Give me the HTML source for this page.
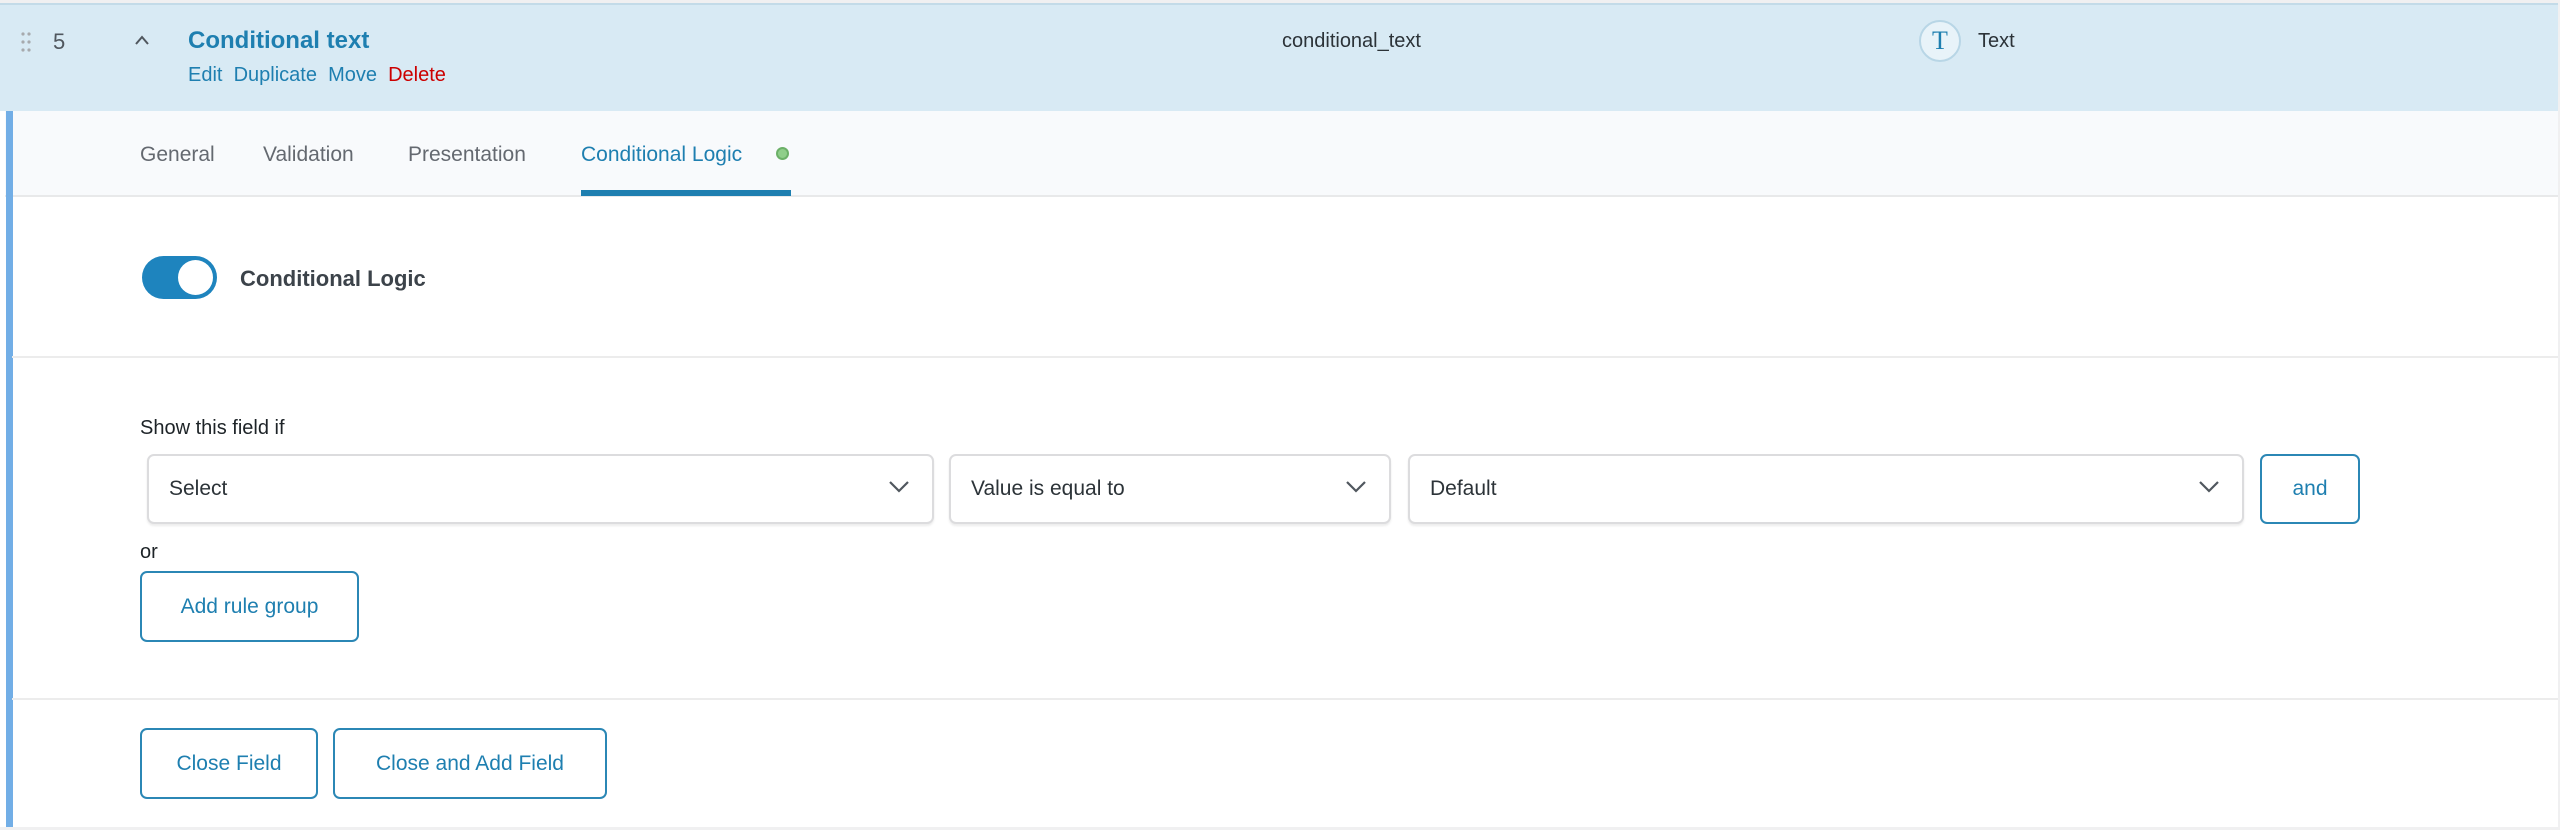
<!DOCTYPE html>
<html><head><meta charset="utf-8"><style>
*{box-sizing:border-box;margin:0;padding:0}
body{width:2560px;height:830px;background:#f0f0f1;font-family:"Liberation Sans",sans-serif;position:relative;overflow:hidden}
.a{position:absolute;white-space:nowrap}
.box{position:absolute;left:0;top:3px;width:2558px;height:824px;background:#fff;border-top:2px solid #c3dbe8}
.hdr{position:absolute;left:0;top:5px;width:2558px;height:106px;background:#d8eaf4}
.tabs{position:absolute;left:5px;top:111px;width:2553px;height:86px;background:#f8fafc;border-bottom:2px solid #e8e9ea}
.bar{position:absolute;left:6px;top:111px;width:7px;height:716px;background:#72aee6}
.hr{position:absolute;left:12px;width:2546px;height:2px;background:#ececec}
.sel{position:absolute;top:454px;height:70px;border:2px solid #dcdcde;border-radius:7px;background:#fff;box-shadow:0 2px 2px rgba(0,0,0,.08);font-size:21px;color:#2c3338;padding-left:20px;line-height:66px}
.sel svg{position:absolute;right:22px;top:24px}
.btn{position:absolute;border:2px solid #2b87b5;border-radius:7px;color:#1e7fb0;font-size:21px;text-align:center;background:#fff}
.tab{position:absolute;top:143px;font-size:21px;color:#646970;white-space:nowrap}
</style></head><body>
<div class="box"></div>
<div class="hdr"></div>
<div class="tabs"></div>
<div class="bar"></div>
<svg class="a" style="left:20px;top:31px" width="12" height="22"><g fill="#a7aaad"><circle cx="3" cy="3" r="1.6"/><circle cx="9" cy="3" r="1.6"/><circle cx="3" cy="11" r="1.6"/><circle cx="9" cy="11" r="1.6"/><circle cx="3" cy="19" r="1.6"/><circle cx="9" cy="19" r="1.6"/></g></svg>
<div class="a" style="left:53px;top:29px;font-size:22px;color:#50575e">5</div>
<svg class="a" style="left:134px;top:34px" width="16" height="12"><path d="M2 10 L8 3 L14 10" fill="none" stroke="#50575e" stroke-width="2"/></svg>
<div class="a" style="left:188px;top:27px;font-size:24px;font-weight:bold;color:#1e7fb0">Conditional text</div>
<div class="a" style="left:188px;top:64px;font-size:20px;color:#1e7fb0">Edit&nbsp;&nbsp;Duplicate&nbsp;&nbsp;Move&nbsp;&nbsp;<span style="color:#c00">Delete</span></div>
<div class="a" style="left:1282px;top:30px;font-size:20px;color:#2c3338">conditional_text</div>
<div class="a" style="left:1919px;top:20px;width:42px;height:42px;border:2px solid #b8d6e6;border-radius:50%;background:#e8f3f9;color:#1e7fb0;font-family:'Liberation Serif',serif;font-size:26px;text-align:center;line-height:38px">T</div>
<div class="a" style="left:1978px;top:30px;font-size:20px;color:#2c3338">Text</div>
<div class="tab" style="left:140px">General</div>
<div class="tab" style="left:263px">Validation</div>
<div class="tab" style="left:408px">Presentation</div>
<div class="tab" style="left:581px;color:#1e7fb0">Conditional Logic</div>
<div class="a" style="left:776px;top:147px;width:13px;height:13px;border-radius:50%;background:#8fce8a;border:2px solid #6cb068"></div>
<div class="a" style="left:581px;top:190px;width:210px;height:6px;background:#1e7fb0"></div>
<div class="a" style="left:142px;top:256px;width:75px;height:43px;border-radius:22px;background:#1e84be"></div>
<div class="a" style="left:178px;top:260px;width:35px;height:35px;border-radius:50%;background:#fff"></div>
<div class="a" style="left:240px;top:266px;font-size:22px;font-weight:bold;color:#3c434a">Conditional Logic</div>
<div class="hr" style="top:356px"></div>
<div class="a" style="left:140px;top:417px;font-size:20px;color:#1d2327">Show this field if</div>
<div class="sel" style="left:147px;width:787px">Select<svg width="22" height="14"><path d="M2 2 L11 11 L20 2" fill="none" stroke="#50575e" stroke-width="2.2"/></svg></div>
<div class="sel" style="left:949px;width:442px">Value is equal to<svg width="22" height="14"><path d="M2 2 L11 11 L20 2" fill="none" stroke="#50575e" stroke-width="2.2"/></svg></div>
<div class="sel" style="left:1408px;width:836px">Default<svg width="22" height="14"><path d="M2 2 L11 11 L20 2" fill="none" stroke="#50575e" stroke-width="2.2"/></svg></div>
<div class="btn" style="left:2260px;top:454px;width:100px;height:70px;line-height:66px">and</div>
<div class="a" style="left:140px;top:541px;font-size:20px;color:#1d2327">or</div>
<div class="btn" style="left:140px;top:571px;width:219px;height:71px;line-height:67px">Add rule group</div>
<div class="hr" style="top:698px"></div>
<div class="btn" style="left:140px;top:728px;width:178px;height:71px;line-height:67px">Close Field</div>
<div class="btn" style="left:333px;top:728px;width:274px;height:71px;line-height:67px">Close and Add Field</div>
</body></html>
